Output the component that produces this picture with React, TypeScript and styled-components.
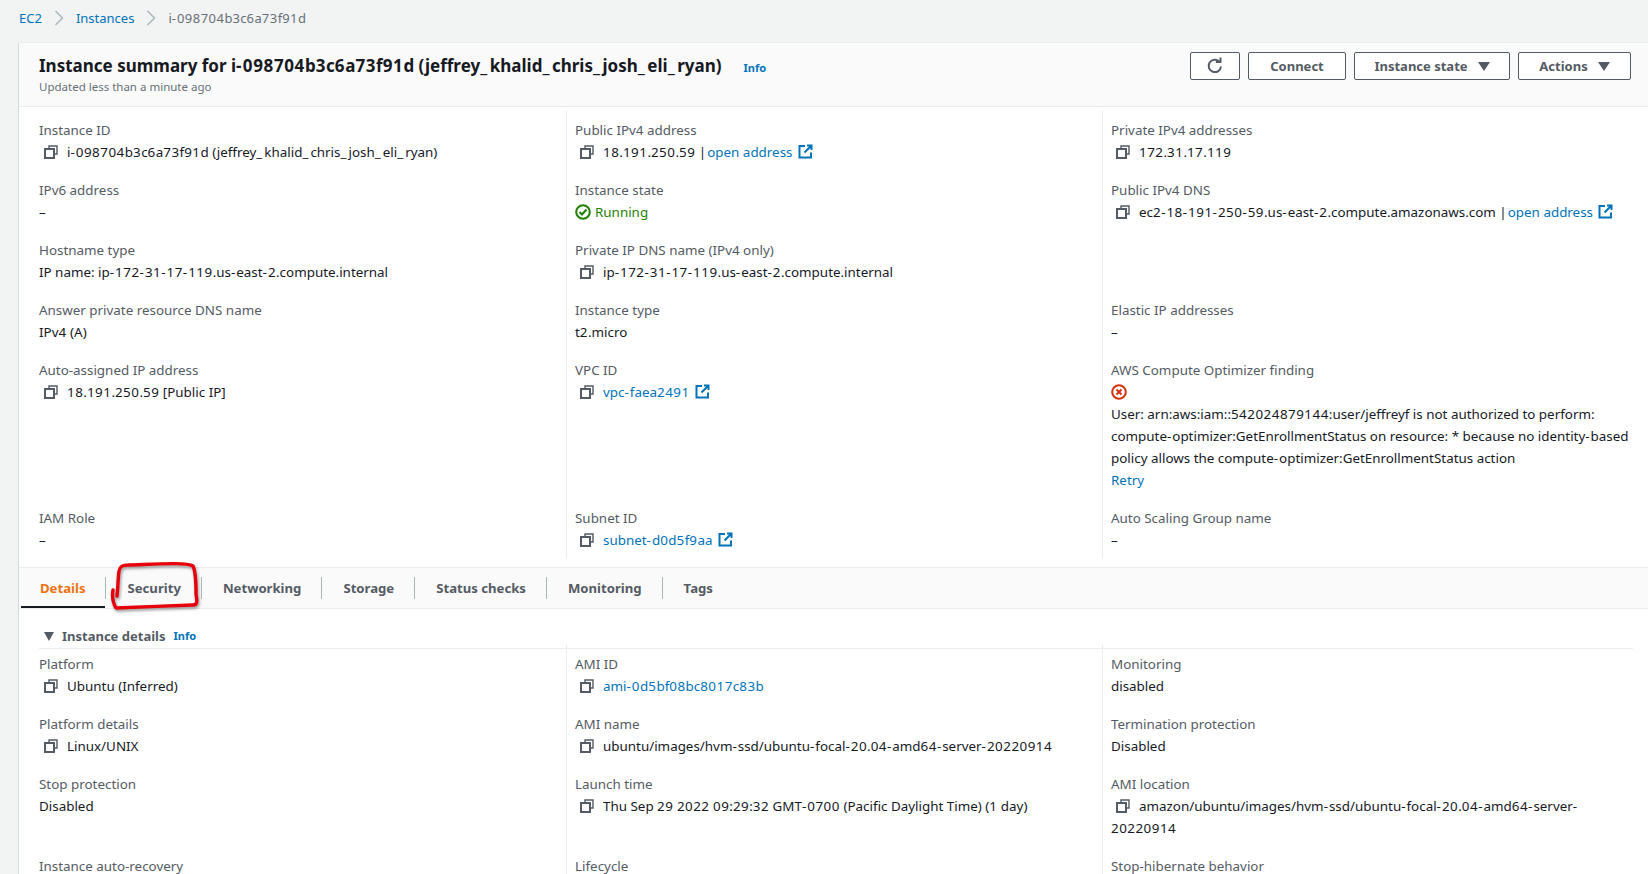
import React from "react";
import styled, { createGlobalStyle } from "styled-components";

const GlobalStyle = createGlobalStyle`
  html, body {
    margin: 0;
    height: 874px;
    overflow: hidden;
    background: #f2f3f3;
    font-family: "Noto Sans", "Open Sans", sans-serif;
    font-size: 14px;
    line-height: 22px;
    color: #16191f;
  }
`;

const Page = styled.div`
  position: relative;
  height: 874px;
  overflow: hidden;
`;

const Breadcrumbs = styled.nav`
  display: flex;
  align-items: center;
  height: 42px;
  padding: 0 0 6px 19px;
  box-sizing: border-box;
  font-size: 13px;
  color: #687078;
`;

const Chevron = styled.svg`
  width: 10px;
  height: 16px;
  margin: 0 12px;
  fill: none;
  stroke: #aab7b8;
  stroke-width: 1.5;
`;

const Link = styled.a`
  color: #0073bb;
`;

const PipeLink = styled(Link)`
  margin-left: 1px;
`;

const Panel = styled.main`
  margin-left: 18px;
  background: #fff;
  border-left: 1px solid #d5dbdb;
  border-top: 1px solid #eaeded;
`;

const Header = styled.header`
  display: flex;
  justify-content: space-between;
  height: 64px;
  padding: 9px 17px 0 20px;
  box-sizing: border-box;
  background: #fafafa;
  border-bottom: 1px solid #eaeded;
`;

const TitleRow = styled.div`
  display: flex;
  align-items: baseline;
`;

const Title = styled.h1`
  margin: 0;
  font-size: 17px;
  line-height: 27px;
  font-weight: 700;
`;

const InfoLink = styled.a<{ $gap: number }>`
  margin-left: ${(p) => p.$gap}px;
  font-size: 11px;
  font-weight: 700;
  color: #0073bb;
`;

const Updated = styled.div`
  font-size: 11.5px;
  line-height: 16px;
  color: #687078;
`;

const Actions = styled.div`
  display: flex;
  gap: 8px;
  height: 28px;
`;

const Button = styled.button<{ $w: number }>`
  display: flex;
  align-items: center;
  justify-content: center;
  gap: 10px;
  width: ${(p) => p.$w}px;
  padding: 0;
  background: #fff;
  border: 1px solid #545b64;
  border-radius: 2px;
  color: #545b64;
  font-family: inherit;
  font-size: 13px;
  font-weight: 700;
`;

const Caret = styled.svg`
  width: 12px;
  height: 9px;
  fill: #545b64;
`;

const FieldGrid = styled.section<{ $top: number }>`
  display: grid;
  grid-template-columns: 527px 536px 1fr;
  margin: ${(p) => p.$top}px 15px 0 20px;
`;

const Cell = styled.div`
  padding: 8px 0 8px 8px;
  border-left: 1px solid #eaeded;

  &:nth-child(3n + 1) {
    padding-left: 0;
    border-left: none;
  }
`;

const Label = styled.div`
  font-size: 13.4px;
  color: #545b64;
`;

const Value = styled.div<{ $copy?: boolean }>`
  position: relative;
  padding-left: ${(p) => (p.$copy ? 28 : 0)}px;
  font-size: 13.4px;
  white-space: nowrap;
`;

const Track = styled.span<{ $em: number }>`
  letter-spacing: ${(p) => p.$em}em;
`;

const CopyIcon = styled.svg`
  position: absolute;
  left: 5px;
  top: 4px;
  width: 14px;
  height: 14px;
  fill: none;
  stroke: #545b64;
  stroke-width: 2;
`;

const External = styled.svg`
  width: 15px;
  height: 15px;
  margin-left: 5px;
  vertical-align: -2px;
  fill: none;
  stroke: #0073bb;
  stroke-width: 2;
`;

const Running = styled.div`
  display: flex;
  align-items: center;
  gap: 4px;
  font-size: 13.4px;
  color: #1d8102;
`;

const StatusIcon = styled.svg`
  display: block;
  width: 16px;
  height: 16px;
  fill: none;
  stroke-width: 2;
`;

const ErrorRow = styled.div`
  display: flex;
  align-items: center;
  height: 22px;
`;

const Tabs = styled.div`
  display: flex;
  height: 40px;
  margin-top: 8px;
  padding-left: 2px;
  background: #fafafa;
  border-top: 1px solid #eaeded;
  border-bottom: 1px solid #eaeded;
`;

const Tab = styled.div<{ $active?: boolean }>`
  display: flex;
  align-items: center;
  padding: 2px 20px 0 ${(p) => (p.$active ? 19 : 21)}px;
  font-size: 13.15px;
  font-weight: 700;
  color: ${(p) => (p.$active ? "#ec7211" : "#545b64")};
  border-bottom: 2px solid ${(p) => (p.$active ? "#16191f" : "transparent")};
`;

const TabDivider = styled.span`
  align-self: center;
  width: 1px;
  height: 22px;
  background: #aab7b8;
`;

const SectionHead = styled.div`
  display: flex;
  align-items: center;
  height: 40px;
  margin: 0 15px 0 20px;
  padding: 15px 0 0 5px;
  box-sizing: border-box;
  border-bottom: 1px solid #eaeded;
  font-size: 13px;
  font-weight: 700;
  color: #545b64;
`;

const SectionCaret = styled.svg`
  width: 10px;
  height: 9px;
  margin-right: 8px;
  fill: #545b64;
`;

const Annotation = styled.svg`
  position: absolute;
  left: 108px;
  top: 558px;
  width: 96px;
  height: 58px;
  fill: none;
  stroke: #e7000b;
  stroke-width: 3.4;
  stroke-linecap: round;
  stroke-linejoin: round;
  filter: drop-shadow(1px 2px 1.5px rgba(0, 0, 0, 0.4));
`;

// digits, hyphens and underscores run wider in the original face
const wide = (text: string) =>
  text.split(/(\d+|-+|_+)/).map((part, i) => {
    if (/^\d/.test(part)) return <Track key={i} $em={0.037}>{part}</Track>;
    if (part[0] === "-") return <Track key={i} $em={0.075}>{part}</Track>;
    if (part[0] === "_") return <Track key={i} $em={0.15}>{part}</Track>;
    return part;
  });

const Copy = () => (
  <CopyIcon viewBox="0 0 14 14">
    <rect x="1" y="4" width="9" height="9" />
    <path d="M5 3.5V1h8v8h-2.5" strokeWidth="1.4" />
  </CopyIcon>
);

const Ext = () => (
  <External viewBox="0 0 15 15">
    <path d="M7 2H1.5v11.5H13V8.5" />
    <path d="M9 1.5h4.5V6M13.5 1.5 6.5 8.5" />
  </External>
);

const DownCaret = () => (
  <Caret viewBox="0 0 12 9">
    <path d="M0 0h12L6 9z" />
  </Caret>
);

const Sep = () => (
  <Chevron viewBox="0 0 10 16">
    <path d="M1.5 1 8.5 8l-7 7" />
  </Chevron>
);

const Plain = ({ label, value }: { label: string; value: string }) => (
  <Cell>
    <Label>{label}</Label>
    <Value>{wide(value)}</Value>
  </Cell>
);

const Copyable = ({ label, value }: { label: string; value: string }) => (
  <Cell>
    <Label>{label}</Label>
    <Value $copy>
      <Copy />
      {wide(value)}
    </Value>
  </Cell>
);

const Linked = ({ label, value, ext }: { label: string; value: string; ext?: boolean }) => (
  <Cell>
    <Label>{label}</Label>
    <Value $copy>
      <Copy />
      <Link>{wide(value)}</Link>
      {ext && <Ext />}
    </Value>
  </Cell>
);

const Address = ({ label, value }: { label: string; value: string }) => (
  <Cell>
    <Label>{label}</Label>
    <Value $copy>
      <Copy />
      {wide(value)} |<PipeLink>open address</PipeLink>
      <Ext />
    </Value>
  </Cell>
);

const tabs = ["Details", "Security", "Networking", "Storage", "Status checks", "Monitoring", "Tags"];

const optimizerError = [
  "User: arn:aws:iam::542024879144:user/jeffreyf is not authorized to perform:",
  "compute-optimizer:GetEnrollmentStatus on resource: * because no identity-based",
  "policy allows the compute-optimizer:GetEnrollmentStatus action",
];

export default function App() {
  return (
    <Page>
      <GlobalStyle />
      <Breadcrumbs>
        <Link>EC2</Link>
        <Sep />
        <Link>Instances</Link>
        <Sep />
        <span>{wide("i-098704b3c6a73f91d")}</span>
      </Breadcrumbs>
      <Panel>
        <Header>
          <div>
            <TitleRow>
              <Title>{wide("Instance summary for i-098704b3c6a73f91d (jeffrey_khalid_chris_josh_eli_ryan)")}</Title>
              <InfoLink $gap={22}>Info</InfoLink>
            </TitleRow>
            <Updated>Updated less than a minute ago</Updated>
          </div>
          <Actions>
            <Button $w={50}>
              <svg width="20" height="20" viewBox="0 0 20 20" fill="none" stroke="#545b64" strokeWidth="2">
                <path d="M16 10.5a6.2 6.2 0 1 1-2-5.2" />
                <path d="M15.5 1.5v4.6h-4.6" />
              </svg>
            </Button>
            <Button $w={98}>Connect</Button>
            <Button $w={156}>
              Instance state <DownCaret />
            </Button>
            <Button $w={113}>
              Actions <DownCaret />
            </Button>
          </Actions>
        </Header>

        <FieldGrid $top={4}>
          <Copyable label="Instance ID" value="i-098704b3c6a73f91d (jeffrey_khalid_chris_josh_eli_ryan)" />
          <Address label="Public IPv4 address" value="18.191.250.59" />
          <Copyable label="Private IPv4 addresses" value="172.31.17.119" />

          <Plain label="IPv6 address" value="–" />
          <Cell>
            <Label>Instance state</Label>
            <Running>
              <StatusIcon viewBox="0 0 16 16" stroke="#1d8102">
                <circle cx="8" cy="8" r="6.8" />
                <path d="M4.5 8l2.5 2.5L11.5 5.5" />
              </StatusIcon>
              Running
            </Running>
          </Cell>
          <Address label="Public IPv4 DNS" value="ec2-18-191-250-59.us-east-2.compute.amazonaws.com" />

          <Plain label="Hostname type" value="IP name: ip-172-31-17-119.us-east-2.compute.internal" />
          <Copyable label="Private IP DNS name (IPv4 only)" value="ip-172-31-17-119.us-east-2.compute.internal" />
          <Cell />

          <Plain label="Answer private resource DNS name" value="IPv4 (A)" />
          <Plain label="Instance type" value="t2.micro" />
          <Plain label="Elastic IP addresses" value="–" />

          <Copyable label="Auto-assigned IP address" value="18.191.250.59 [Public IP]" />
          <Linked label="VPC ID" value="vpc-faea2491" ext />
          <Cell>
            <Label>AWS Compute Optimizer finding</Label>
            <ErrorRow>
              <StatusIcon viewBox="0 0 16 16" stroke="#d13212">
                <circle cx="8" cy="8" r="6.8" />
                <path d="M5.5 5.5l5 5M10.5 5.5l-5 5" />
              </StatusIcon>
            </ErrorRow>
            {optimizerError.map((line) => (
              <Value key={line}>{wide(line)}</Value>
            ))}
            <Value>
              <Link>Retry</Link>
            </Value>
          </Cell>

          <Plain label="IAM Role" value="–" />
          <Linked label="Subnet ID" value="subnet-d0d5f9aa" ext />
          <Plain label="Auto Scaling Group name" value="–" />
        </FieldGrid>

        <Tabs>
          {tabs.map((t, i) => (
            <React.Fragment key={t}>
              {i > 0 && <TabDivider />}
              <Tab $active={i === 0}>{t}</Tab>
            </React.Fragment>
          ))}
        </Tabs>

        <SectionHead>
          <SectionCaret viewBox="0 0 10 9">
            <path d="M0 0h10L5 9z" />
          </SectionCaret>
          Instance details
          <InfoLink $gap={8}>Info</InfoLink>
        </SectionHead>

        <FieldGrid $top={-4}>
          <Copyable label="Platform" value="Ubuntu (Inferred)" />
          <Linked label="AMI ID" value="ami-0d5bf08bc8017c83b" />
          <Plain label="Monitoring" value="disabled" />

          <Copyable label="Platform details" value="Linux/UNIX" />
          <Copyable label="AMI name" value="ubuntu/images/hvm-ssd/ubuntu-focal-20.04-amd64-server-20220914" />
          <Plain label="Termination protection" value="Disabled" />

          <Plain label="Stop protection" value="Disabled" />
          <Copyable label="Launch time" value="Thu Sep 29 2022 09:29:32 GMT-0700 (Pacific Daylight Time) (1 day)" />
          <Cell>
            <Label>AMI location</Label>
            <Value $copy>
              <Copy />
              {wide("amazon/ubuntu/images/hvm-ssd/ubuntu-focal-20.04-amd64-server-")}
            </Value>
            <Value>{wide("20220914")}</Value>
          </Cell>

          <Cell>
            <Label>Instance auto-recovery</Label>
          </Cell>
          <Cell>
            <Label>Lifecycle</Label>
          </Cell>
          <Cell>
            <Label>Stop-hibernate behavior</Label>
          </Cell>
        </FieldGrid>
      </Panel>

      <Annotation viewBox="0 0 96 58">
        <path d="M5 32 C4 38 5 45 8 50 C30 49 62 48 85 47 C90 47 89 42 88 36 C88 24 88 14 85 8 C78 4 50 6 20 7 C15 7 12 8 11 13 C10 20 10 30 9 38" />
      </Annotation>
    </Page>
  );
}
